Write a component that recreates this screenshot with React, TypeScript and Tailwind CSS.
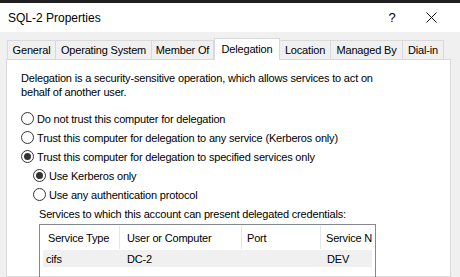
import React from "react";

const tabs = [
  { label: "General", w: "w-[49px]" },
  { label: "Operating System", w: "w-[96px]" },
  { label: "Member Of", w: "w-[62px]" },
  { label: "Delegation", w: "w-[66px]", active: true },
  { label: "Location", w: "w-[51px]" },
  { label: "Managed By", w: "w-[72px]" },
  { label: "Dial-in", w: "w-[41px]" },
];

function Radio({ checked, label, indent }: { checked?: boolean; label: string; indent?: boolean }) {
  return (
    <div className={`flex items-center h-[19px] shrink-0 ${indent ? "pl-[12px]" : "pl-0"}`}>
      <span className="w-[13px] h-[13px] shrink-0 rounded-full border border-[#333333] bg-white flex items-center justify-center">
        {checked && <span className="w-[7px] h-[7px] rounded-full bg-[#333333]" />}
      </span>
      <span className="ml-[3px] whitespace-nowrap">{label}</span>
    </div>
  );
}

export default function App() {
  return (
    <div className="w-[460px] h-[277px] overflow-hidden bg-[#f0f0f0] flex flex-col font-['Liberation_Sans',Arial,sans-serif] text-[11px] leading-[14px] tracking-[-0.18px] text-black">
      <div className="h-[3px] shrink-0 bg-[#202020]" />
      <div className="h-[29px] shrink-0 bg-white flex items-center">
        <span className="pl-[8px] text-[12px] tracking-normal flex-1">SQL-2 Properties</span>
        <span className="text-[13px] w-[20px] text-center mr-[24px]">?</span>
        <svg width="11" height="11" viewBox="0 0 11 11" className="mr-[23px]">
          <path d="M0.5 0.5 L10.5 10.5 M10.5 0.5 L0.5 10.5" stroke="#111" strokeWidth="1" />
        </svg>
      </div>

      <div className="flex-1 min-h-0 flex flex-col pl-[6px] pr-[9px] pt-[6px]">
        <div className="flex items-end h-[21px] shrink-0 pl-[1px] relative z-10">
          {tabs.map((t) =>
            t.active ? (
              <div
                key={t.label}
                className={`${t.w} h-[22px] -mb-px bg-white border border-b-0 border-[#d9d9d9] flex items-start justify-center pt-[3px]`}
              >
                {t.label}
              </div>
            ) : (
              <div
                key={t.label}
                className={`${t.w} h-[19px] border border-l-0 first:border-l border-b-0 border-[#d9d9d9] bg-[#f0f0f0] flex items-center justify-center`}
              >
                {t.label}
              </div>
            )
          )}
        </div>

        <div className="flex-1 min-h-0 bg-white border border-[#d9d9d9] pt-[11px] pl-[14px] flex flex-col">
          <p className="w-[380px] shrink-0">
            Delegation is a security-sensitive operation, which allows services to act on behalf of another user.
          </p>
          <div className="mt-[10px] flex flex-col shrink-0">
            <Radio label="Do not trust this computer for delegation" />
            <Radio label="Trust this computer for delegation to any service (Kerberos only)" />
            <Radio checked label="Trust this computer for delegation to specified services only" />
            <Radio checked indent label="Use Kerberos only" />
            <Radio indent label="Use any authentication protocol" />
          </div>
          <div className="pl-[18px] mt-[3px] shrink-0">Services to which this account can present delegated credentials:</div>

          <div className="ml-[18px] mt-[3px] w-[337px] h-[60px] shrink-0 border border-[#828790] border-b-0 overflow-hidden">
            <div className="flex h-[25px] items-center">
              <div className="w-[80px] pl-[8px] h-[23px] flex items-center border-r border-[#e5e5e5]">Service Type</div>
              <div className="w-[122px] pl-[7px] h-[23px] flex items-center border-r border-[#e5e5e5]">User or Computer</div>
              <div className="w-[79px] pl-[5px] h-[23px] flex items-center border-r border-[#e5e5e5]">Port</div>
              <div className="flex-1 pl-[5px] h-[23px] flex items-center whitespace-nowrap overflow-hidden">Service N</div>
            </div>
            <div className="mx-[3px] h-[17px] bg-[#f0f0f0] flex items-center">
              <div className="w-[77px] pl-[3px]">cifs</div>
              <div className="w-[122px] pl-[7px]">DC-2</div>
              <div className="w-[79px]" />
              <div className="pl-[6px]">DEV</div>
            </div>
          </div>
        </div>
      </div>
    </div>
  );
}
